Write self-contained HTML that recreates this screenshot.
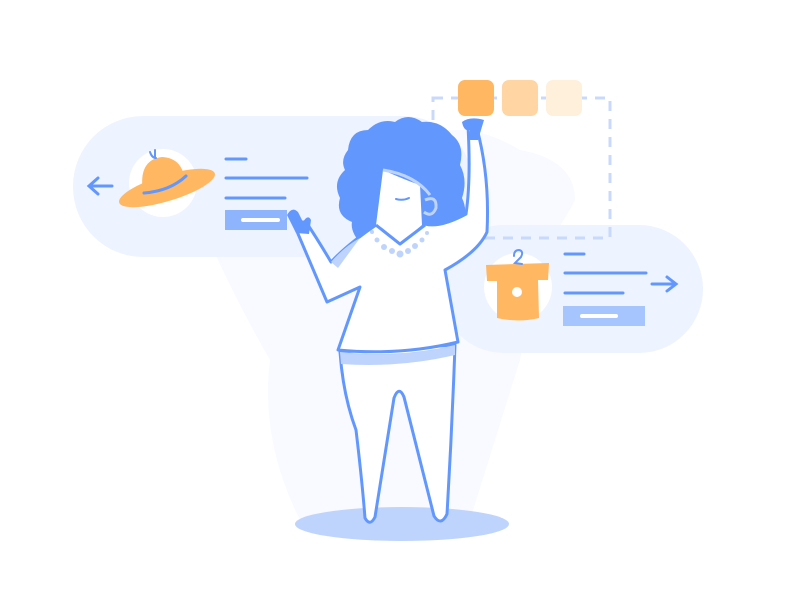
<!DOCTYPE html>
<html><head><style>html,body{margin:0;padding:0;background:#fff;width:800px;height:600px;overflow:hidden}</style></head><body>
<svg width="800" height="600" viewBox="0 0 800 600" xmlns="http://www.w3.org/2000/svg">
<!-- faint background figure -->
<path d="M250 140 Q290 105 340 125 Q390 110 430 135 Q470 120 520 150 Q575 160 575 200 Q560 230 540 250 Q530 300 520 360 L470 520 L300 520 Q260 440 270 360 Q230 290 200 220 Q210 160 250 140Z" fill="#f8faff"/>
<!-- pills -->
<rect x="73" y="116" width="400" height="141" rx="70" fill="#edf3ff"/>
<rect x="440" y="225" width="263" height="128" rx="64" fill="#edf3ff"/>
<!-- dashed rect -->
<rect x="433" y="98" width="177" height="140" fill="none" stroke="#c8d9fb" stroke-width="3" stroke-dasharray="10 8"/>
<!-- swatches -->
<rect x="458" y="80" width="36" height="36" rx="7" fill="#ffb762"/>
<rect x="502" y="80" width="36" height="36" rx="7" fill="#ffd5a3"/>
<rect x="546" y="80" width="36" height="36" rx="7" fill="#fff0dc"/>
<!-- left card content -->
<path d="M112 186 L90 186 M98 178 L89 186 L98 194" stroke="#6297fd" stroke-width="3" fill="none" stroke-linecap="round"/>
<circle cx="163" cy="183" r="34" fill="#fff"/>
<path d="M143 192 Q138 160 162 157 Q183 158 185 182Z" fill="#ffb762"/>
<ellipse cx="167" cy="188" rx="50" ry="13" transform="rotate(-17 167 188)" fill="#ffb762"/>
<path d="M144 193 Q170 191 186 176" stroke="#6297fd" stroke-width="3" fill="none" stroke-linecap="round"/>
<path d="M150 152 Q152 158 156 158 M155 150 L155 158" stroke="#6297fd" stroke-width="2" fill="none" stroke-linecap="round"/>
<g stroke="#6297fd" stroke-width="3" stroke-linecap="round"><line x1="226" y1="159" x2="246" y2="159"/><line x1="226" y1="178" x2="307" y2="178"/><line x1="226" y1="198" x2="285" y2="198"/></g>
<rect x="225" y="210" width="62" height="20" fill="#8db4fc"/>
<line x1="243" y1="220" x2="278" y2="220" stroke="#fff" stroke-width="4" stroke-linecap="round"/>
<!-- right card content -->
<circle cx="518" cy="287" r="34" fill="#fff"/>
<path d="M486 265 L549 263 L548 280 L538 280 L539 318 Q518 323 497 318 L497 281 L487 281Z" fill="#ffb762"/>
<circle cx="517" cy="292" r="5" fill="#fff"/>
<path d="M514 256 Q514 250 519 250 Q524 251 521 257 L515 263 L522 264" stroke="#6297fd" stroke-width="2" fill="none" stroke-linecap="round"/>
<g stroke="#6297fd" stroke-width="3" stroke-linecap="round"><line x1="565" y1="254" x2="584" y2="254"/><line x1="565" y1="273" x2="646" y2="273"/><line x1="565" y1="293" x2="623" y2="293"/></g>
<path d="M652 284 L675 284 M667 277 L676 284 L667 291" stroke="#6297fd" stroke-width="3" fill="none" stroke-linecap="round"/>
<rect x="563" y="306" width="82" height="20" fill="#a6c4fd"/>
<line x1="582" y1="316" x2="616" y2="316" stroke="#fff" stroke-width="4" stroke-linecap="round"/>
<!-- shadow -->
<ellipse cx="402" cy="524" rx="107" ry="17" fill="#bfd4fc"/>
<!-- legs -->
<path d="M340 352 Q343 395 356 430 Q362 480 365 518 Q370 527 375 517 L394 398 Q399 385 404 397 Q420 460 434 516 Q441 527 447 514 Q452 430 455 345Z" fill="#fff" stroke="#6297fd" stroke-width="3" stroke-linejoin="round"/>
<path d="M340 352 Q400 358 455 345 L455 355 Q400 368 341 364Z" fill="#bfd4fc"/>
<!-- hair -->
<path d="M348 150 Q350 130 368 130 Q380 118 395 122 Q408 112 422 122 Q440 120 452 135 Q465 145 460 165 Q468 180 462 198 Q470 215 458 228 Q440 238 420 240 L362 245 Q350 232 352 222 Q335 215 340 198 Q332 182 345 170 Q340 160 348 150Z" fill="#6297fd"/>
<!-- shirt -->
<path d="M293 222 L327 302 L360 287 L338 350 Q400 356 458 342 L445 270 Q478 252 487 232 Q490 175 476 125 L468 126 Q471 180 466 214 Q440 228 425 224 L400 244 L376 225 Q348 244 331 262 Q318 240 306 222Z" fill="#fff" stroke="#6297fd" stroke-width="3" stroke-linejoin="round"/>
<path d="M331 262 Q345 246 360 238 L338 268Z" fill="#bfd4fc"/>
<!-- face -->
<path d="M383 170 Q405 180 420 185 L422 225 L400 244 L376 225Z" fill="#fff"/>
<path d="M383 170 Q415 175 430 195" stroke="#bfd4fc" stroke-width="3" fill="none"/>
<path d="M425 200 Q437 195 436 208 Q432 218 424 212" stroke="#bfd4fc" stroke-width="3" fill="none"/>
<path d="M396 199 Q403 201 409 198" stroke="#6297fd" stroke-width="2" fill="none" stroke-linecap="round"/>
<path d="M376 225 L400 244 L425 225" stroke="#6297fd" stroke-width="3" fill="none" stroke-linejoin="round"/>
<g fill="#bfd4fc"><circle cx="372" cy="232" r="2"/><circle cx="377" cy="240" r="2.5"/><circle cx="384" cy="247" r="3"/><circle cx="392" cy="251" r="3"/><circle cx="400" cy="254" r="3.5"/><circle cx="408" cy="251" r="3"/><circle cx="415" cy="246" r="3"/><circle cx="422" cy="240" r="2.5"/><circle cx="427" cy="233" r="2"/></g>
<!-- hands -->
<path d="M287 215 Q292 206 298 212 L303 222 Q308 214 311 220 L309 234 L296 233Z" fill="#6297fd"/>
<path d="M462 122 Q464 132 470 130 L468 140 L478 140 L484 120 Q470 116 462 122Z" fill="#6297fd"/>
</svg>
</body></html>
